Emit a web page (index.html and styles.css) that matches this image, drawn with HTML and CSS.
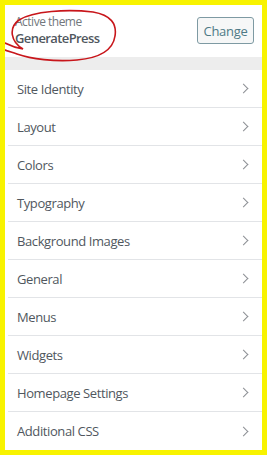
FILE: index.html
```html
<!DOCTYPE html>
<html lang="en">
<head>
    <meta charset="UTF-8">
    <meta name="viewport" content="width=device-width, initial-scale=1.0">
    <title>Customize</title>
    <link rel="stylesheet" href="styles.css">
</head>
<body>
    <div class="frame">
        <div class="theme-header">
            <div class="theme-info">
                <span class="theme-label">Active theme</span>
                <span class="theme-name">GeneratePress</span>
            </div>
            <button class="change-btn">Change</button>
            <svg class="scribble" width="120" height="60" viewBox="0 0 120 60">
                <path d="M0 37 C6 40 12 42 18 43 C6 36 3 22 14 14 C28 5 62 3 88 6 C106 9 112 18 110 30 C108 44 94 52 72 54 C50 56 26 53 12 48 C6 46 2 45 0 44" fill="none" stroke="#c8161b" stroke-width="1.6" stroke-linecap="round"/>
            </svg>
        </div>
        <div class="spacer"></div>
        <ul class="menu">
            <li>Site Identity <span class="chev"></span></li>
            <li>Layout <span class="chev"></span></li>
            <li>Colors <span class="chev"></span></li>
            <li>Typography <span class="chev"></span></li>
            <li>Background Images <span class="chev"></span></li>
            <li>General <span class="chev"></span></li>
            <li>Menus <span class="chev"></span></li>
            <li>Widgets <span class="chev"></span></li>
            <li>Homepage Settings <span class="chev"></span></li>
            <li>Additional CSS <span class="chev"></span></li>
        </ul>
    </div>
</body>
</html>
```

FILE: styles.css
```css
* {
    box-sizing: border-box;
}

body {
    margin: 0;
    font-family: "Open Sans", "Noto Sans", sans-serif;
    color: #50575e;
}

.frame {
    width: 267px;
    height: 455px;
    border: 5px solid #f8f300;
    background: #fff;
    overflow: hidden;
}

.theme-header {
    position: relative;
    display: flex;
    align-items: flex-start;
    justify-content: space-between;
    height: 52px;
    padding: 0 8px 0 10px;
}

.theme-info {
    display: flex;
    flex-direction: column;
    padding-top: 8px;
}

.theme-label {
    font-size: 12px;
    color: #72777c;
    line-height: 17px;
    letter-spacing: -0.5px;
}

.theme-name {
    font-size: 13px;
    font-weight: 600;
    color: #50575e;
    line-height: 17px;
    letter-spacing: -0.6px;
}

.change-btn {
    width: 57px;
    height: 27px;
    margin-top: 12px;
    border: 1px solid #7e9aa3;
    border-radius: 3px;
    background: #f6f7f7;
    color: #4e7a86;
    font-family: inherit;
    font-size: 13px;
    letter-spacing: -0.3px;
    padding: 0;
}

.scribble {
    position: absolute;
    left: 0;
    top: 1px;
}

.spacer {
    height: 13px;
    background: #ededed;
}

.menu {
    list-style: none;
    margin: 0;
    padding: 0 0 0 3px;
}

.menu li {
    display: flex;
    align-items: center;
    justify-content: space-between;
    height: 38px;
    padding: 0 15px 0 9px;
    border-bottom: 1px solid #e2e4e7;
    font-size: 13px;
    letter-spacing: -0.4px;
    color: #50575e;
}

.menu li:last-child {
    border-bottom: none;
}

.chev {
    width: 7px;
    height: 7px;
    border-top: 1.2px solid #8c8f94;
    border-right: 1.2px solid #8c8f94;
    transform: rotate(45deg);
}
```
